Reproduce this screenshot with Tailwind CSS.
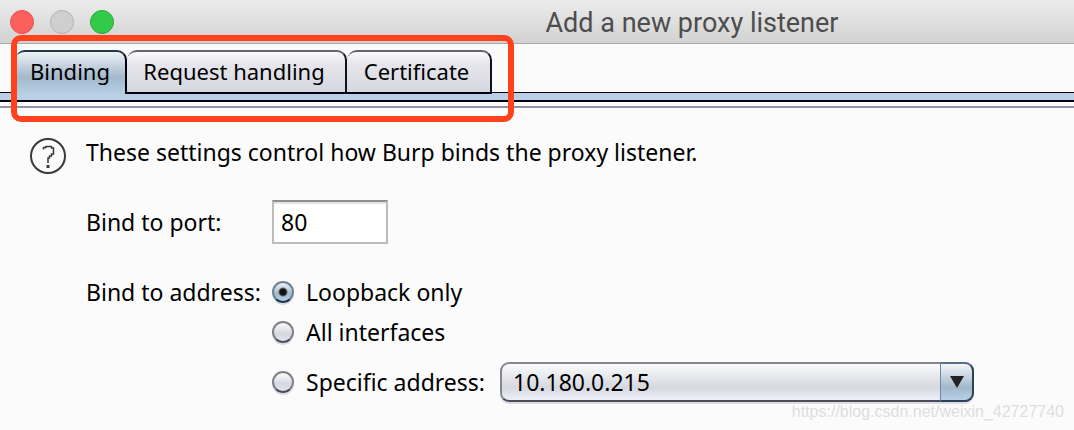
<!DOCTYPE html>
<html lang="en">
<head>
    <meta charset="UTF-8">
    <meta name="viewport" content="width=device-width, initial-scale=1.0">
    <title>Add a new proxy listener</title>
    <script src="https://cdn.jsdelivr.net/npm/@tailwindcss/browser@4"></script>
</head>
<body class="relative min-h-screen overflow-x-hidden bg-[#fbfbfb] font-['Noto_Sans',sans-serif] text-[23px] leading-[30px] text-black">
    <!-- Title bar -->
    <header class="relative flex h-11 items-center border-b border-[#a9a9a9] bg-linear-to-b from-[#ececec] to-[#d2d2d2] px-2.5">
        <div class="flex gap-4">
            <button type="button" aria-label="Close" class="size-6 rounded-full border border-[#e2504b] bg-[#fc605c]"></button>
            <button type="button" aria-label="Minimize" class="size-6 rounded-full border border-[#b3b3b3] bg-[#cfcfcf]" disabled></button>
            <button type="button" aria-label="Zoom" class="size-6 rounded-full border border-[#27a834] bg-[#34ca49]"></button>
        </div>
        <h1 class="flex-1 pt-0.5 pl-[206px] text-center font-[Roboto,sans-serif] text-[27px] text-[#4d4d4d]">Add a new proxy listener</h1>
    </header>

    <!-- Tabs -->
    <nav class="border-b-2 border-[#8f93a5] pb-[4px]">
        <div class="flex border-b border-[#000010] pl-[15px] pt-1.5">
            <div role="tablist" class="relative -mb-0.5 flex text-[22px]">
                <button type="button" role="tab" aria-selected="true" class="h-11 w-[112px] rounded-t-[10px] border-t-2 border-r-2 border-t-[#20384f] border-r-[#000010] bg-linear-to-b from-[#eef3f6] via-[#a3b8cb] via-60% to-[#b8cfe5] pb-1">Binding</button>
                <button type="button" role="tab" aria-selected="false" class="h-11 w-[220px] rounded-t-[10px] border-t-2 border-r-2 border-b-2 border-t-[#62656d] border-r-[#10101f] border-b-[#000010] bg-linear-to-b from-[#fbfbfb] via-[#e6e6ec] via-30% to-[#d6d8df] pr-1 pb-0.5">Request handling</button>
                <button type="button" role="tab" aria-selected="false" class="h-11 w-[145px] rounded-t-[10px] border-t-2 border-r-2 border-b-2 border-t-[#62656d] border-r-[#10101f] border-b-[#000010] bg-linear-to-b from-[#fbfbfb] via-[#e6e6ec] via-30% to-[#d6d8df] pr-1 pb-0.5">Certificate</button>
                <!-- Highlight around the tabs -->
                <div class="pointer-events-none absolute -top-[15px] -right-[22px] -bottom-7 -left-1 z-10 rounded-[10px] border-6 border-[#ff421c]"></div>
            </div>
        </div>
        <div class="h-[9px] border-b-2 border-[#000010] bg-[#b9d0e6]"></div>
    </nav>

    <!-- Binding settings -->
    <main class="flex gap-5 pl-[30px] pt-[30px]">
        <svg class="size-9 shrink-0" viewBox="0 0 36 36" fill="none" stroke="#3a3a3a" role="img" aria-label="Help">
            <circle cx="18" cy="18" r="17" stroke-width="2"/>
            <path d="M13.5 11.5V9.5h2.5V8.5h5.5v1.5h2v6h-2v2h-2v2h-1.5v5" stroke-width="1.5"/>
            <path d="M18 27v3" stroke-width="3"/>
        </svg>
        <form class="min-w-0 flex-1">
            <p class="leading-7">These settings control how Burp binds the proxy listener.</p>

            <div class="mt-[34px] flex items-center">
                <label for="port" class="w-[186px]">Bind to port:</label>
                <input type="text" id="port" name="port" value="80" class="h-11 w-[116px] border-2 border-[#bcbcbc] border-t-[#8e8e8e] bg-white px-[7px] shadow-[inset_0_2px_1px_#e4e4e4] outline-none">
            </div>

            <fieldset class="mt-[33px] flex items-start">
                <legend class="float-left w-[186px]">Bind to address:</legend>
                <div class="flex flex-1 flex-col">
                    <div class="flex items-center gap-3">
                        <input type="radio" id="loopback" name="address" checked class="size-[22px] appearance-none rounded-full border-2 border-[#6d8296] border-b-[#20364c] bg-linear-to-b from-[#eef3f6] via-[#a3b8cb] via-60% to-[#b8cfe5] shadow-[0_2px_0_#d9dde6] checked:bg-[radial-gradient(circle,#111_0_3px,transparent_5px),linear-gradient(#eef3f6,#a3b8cb_60%,#b8cfe5)]">
                        <label for="loopback">Loopback only</label>
                    </div>
                    <div class="mt-2.5 flex items-center gap-3">
                        <input type="radio" id="all" name="address" class="size-[22px] appearance-none rounded-full border-2 border-[#808087] border-b-[#4b4d58] bg-linear-to-b from-[#fbfbfb] via-[#d6d8df] via-60% to-[#e2e4ef] shadow-[0_2px_0_#d9dde6]">
                        <label for="all">All interfaces</label>
                    </div>
                    <div class="mt-[15px] flex items-center gap-3">
                        <input type="radio" id="specific" name="address" class="size-[22px] appearance-none rounded-full border-2 border-[#808087] border-b-[#4b4d58] bg-linear-to-b from-[#fbfbfb] via-[#d6d8df] via-60% to-[#e2e4ef] shadow-[0_2px_0_#d9dde6]">
                        <label for="specific" class="w-[182px]">Specific address:</label>
                        <div class="relative mr-[100px] flex-1">
                            <select aria-label="Address" class="block h-10 w-full appearance-none rounded-[9px] border-2 border-[#85868f] border-b-[#4b4d58] bg-linear-to-b from-[#fbfbfb] via-[#d6d8df] via-65% to-[#eeeffa] pl-[11px] leading-[30px] shadow-[0_2px_0_#dcdce2] outline-none">
                                <option>10.180.0.215</option>
                            </select>
                            <div class="pointer-events-none absolute inset-y-0 right-0 flex w-[34px] items-center justify-center rounded-r-[9px] border-2 border-l border-[#2b435a] border-t-[#57718a] border-l-[#6d88a0] bg-linear-to-b from-[#f3f6f8] via-[#a3b8cb] via-65% to-[#b8cfe5]">
                                <svg class="h-3 w-3.5" viewBox="0 0 14 12" fill="#222"><path d="M0 0h14L7 12z"/></svg>
                            </div>
                        </div>
                    </div>
                </div>
            </fieldset>
        </form>
    </main>

    <p class="absolute right-2.5 bottom-1.5 font-['Liberation_Sans',sans-serif] text-base leading-6 text-[#dedede]">https://blog.csdn.net/weixin_42727740</p>
</body>
</html>
